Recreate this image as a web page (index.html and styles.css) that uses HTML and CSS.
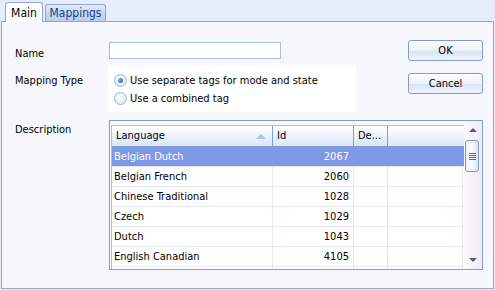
FILE: index.html
```html
<!DOCTYPE html>
<html lang="en">
<head>
	<meta charset="UTF-8">
	<title>Language Mapping</title>
	<link rel="stylesheet" href="styles.css">
</head>
<body>
	<div class="window">
		<div class="tabs">
			<div class="tab tab-active">Main</div>
			<div class="tab">Mappings</div>
		</div>

		<div class="panel">
			<div class="form">
				<label class="lbl lbl-name">Name</label>
				<input class="name-input" type="text">

				<div class="buttons">
					<button type="button" class="btn">OK</button>
					<button type="button" class="btn">Cancel</button>
				</div>

				<label class="lbl lbl-map">Mapping Type</label>
				<div class="radio-box">
					<div class="radio"><span class="dot dot-on"></span>Use separate tags for mode and state</div>
					<div class="radio"><span class="dot"></span>Use a combined tag</div>
				</div>

				<label class="lbl lbl-desc">Description</label>
				<div class="grid">
					<div class="list">
						<div class="list-head">
							<div class="hcell">Language<span class="sort"></span></div>
							<div class="hcell">Id</div>
							<div class="hcell">De...</div>
							<div class="hcell"></div>
						</div>
						<div class="row row-sel"><div class="cell">Belgian Dutch</div><div class="cell num">2067</div><div class="cell"></div><div class="cell"></div></div>
						<div class="row"><div class="cell">Belgian French</div><div class="cell num">2060</div><div class="cell"></div><div class="cell"></div></div>
						<div class="row"><div class="cell">Chinese Traditional</div><div class="cell num">1028</div><div class="cell"></div><div class="cell"></div></div>
						<div class="row"><div class="cell">Czech</div><div class="cell num">1029</div><div class="cell"></div><div class="cell"></div></div>
						<div class="row"><div class="cell">Dutch</div><div class="cell num">1043</div><div class="cell"></div><div class="cell"></div></div>
						<div class="row"><div class="cell">English Canadian</div><div class="cell num">4105</div><div class="cell"></div><div class="cell"></div></div>
						<div class="row"><div class="cell"></div><div class="cell"></div><div class="cell"></div><div class="cell"></div></div>
					</div>
					<div class="scrollbar">
						<div class="sb-btn"><span class="arrow-up"></span></div>
						<div class="thumb"><span class="grip"></span></div>
						<div class="sb-track"></div>
						<div class="sb-btn"><span class="arrow-down"></span></div>
					</div>
				</div>
			</div>
		</div>
	</div>
</body>
</html>
```

FILE: styles.css
```css
* {
	box-sizing: border-box;
}

body {
	margin: 0;
	background-color: #e6ecf9;
	font-family: "DejaVu Sans Condensed", "DejaVu Sans", sans-serif;
	font-stretch: condensed;
	font-size: 11px;
	color: #000000;
}

.window {
	width: 495px;
	height: 290px;
}

/* tabs */
.tabs {
	height: 21px;
	display: flex;
	align-items: flex-end;
	gap: 2px;
	padding-left: 5px;
	position: relative;
	z-index: 1;
}

.tab {
	width: 61px;
	height: 17px;
	border: 1px solid #8fa7d8;
	border-bottom: none;
	border-radius: 3px 3px 0 0;
	background: linear-gradient(#e4ecfa, #c9d9f4 45%, #b9cdf0);
	color: #1d3c84;
	text-align: center;
	line-height: 16px;
	font-size: 12px;
}

.tab-active {
	width: 38px;
	height: 20px;
	margin-bottom: -1px;
	background: #ffffff;
	color: #000000;
	line-height: 20px;
}

/* panel */
.panel {
	margin-left: 1px;
	width: 493px;
	height: 268px;
	border: 1px solid #8da6d6;
	background-color: #f5f7fd;
}

.form {
	display: grid;
	grid-template-columns: 94px 1fr 75px;
	grid-template-rows: 21px 51px auto;
	padding: 18px 10px 0 13px;
}

.lbl {
	grid-column: 1;
	line-height: 13px;
}

.lbl-name {
	padding-top: 7px;
}

.lbl-map {
	padding-top: 13px;
}

.lbl-desc {
	margin-top: 8px;
	padding-top: 3px;
}

.name-input {
	grid-column: 2;
	align-self: center;
	width: 172px;
	height: 17px;
	margin: 0;
	border: 1px solid #a7bde8;
	background-color: #ffffff;
}

.buttons {
	grid-column: 3;
	grid-row: 1 / 3;
	display: flex;
	flex-direction: column;
	gap: 12px;
}

.btn {
	width: 75px;
	height: 21px;
	border: 1px solid #7f9bd0;
	border-radius: 3px;
	background: linear-gradient(#fbfcff, #eef2fb 50%, #dbe4f7 52%, #eef2fc);
	font: inherit;
	font-size: 11px;
	color: #000000;
	padding: 0;
}

.radio-box {
	grid-column: 2;
	margin-top: 4px;
	margin-left: -1px;
	width: 248px;
	height: 47px;
	padding: 6px 0 0 6px;
	background-color: #ffffff;
}

.radio {
	display: flex;
	align-items: center;
	height: 18px;
	gap: 3px;
}

.dot {
	width: 13px;
	height: 13px;
	border: 1px solid #a5b2c6;
	border-radius: 50%;
	background: radial-gradient(circle at 40% 40%, #ffffff, #dde3ec);
	display: flex;
	align-items: center;
	justify-content: center;
}

.dot-on::after {
	content: "";
	width: 5px;
	height: 5px;
	border-radius: 50%;
	background: radial-gradient(circle at 40% 40%, #6cb0e8, #1c5fa8);
}

/* language grid */
.grid {
	grid-column: 2 / 4;
	margin-top: 8px;
	height: 150px;
	border: 1px solid #7f9fd6;
	background-color: #f8fafe;
	display: flex;
	padding: 4px 0 0 1px;
}

.list {
	flex: 1;
	overflow: hidden;
	border-left: 1px solid #a9c0ea;
}

.list-head, .row {
	display: grid;
	grid-template-columns: 161px 81px 34px 75px;
}

.list-head {
	height: 22px;
	border-top: 1px solid #a9c0ea;
	border-bottom: 1px solid #7f9fd6;
	background: linear-gradient(#ffffff, #f0f5fd 40%, #d9e5fa);
}

.hcell {
	border-right: 1px solid #7f9fd6;
	padding: 0 4px;
	line-height: 20px;
	display: flex;
	justify-content: space-between;
	align-items: center;
}

.hcell:last-child {
	border-right: none;
}

.sort {
	width: 0;
	height: 0;
	margin-right: 2px;
	border-left: 5px solid transparent;
	border-right: 5px solid transparent;
	border-bottom: 5px solid #a8c3ef;
}

.row {
	height: 20px;
	border-bottom: 1px solid #e2eaf8;
	background-color: #ffffff;
}

.cell {
	border-right: 1px solid #e2eaf8;
	padding: 0 3px 0 2px;
	line-height: 19px;
	white-space: nowrap;
}

.num {
	text-align: right;
	padding-right: 4px;
}

.row-sel {
	background-color: #7f98e5;
	color: #ffffff;
}

.row-sel .cell {
	border-right-color: #7f98e5;
}

/* scrollbar */
.scrollbar {
	width: 18px;
	margin-top: -4px;
	display: flex;
	flex-direction: column;
	background: linear-gradient(90deg, #fbf8fb, #f3ebf2);
}

.sb-btn {
	height: 18px;
	display: flex;
	align-items: center;
	justify-content: center;
}

.arrow-up, .arrow-down {
	width: 0;
	height: 0;
	border-left: 4px solid transparent;
	border-right: 4px solid transparent;
}

.arrow-up {
	border-bottom: 4px solid #4f6088;
}

.arrow-down {
	border-top: 4px solid #4f6088;
}

.thumb {
	width: 14px;
	height: 32px;
	margin: 1px 0 0 1px;
	border: 1px solid #8798b9;
	border-radius: 3px;
	background: linear-gradient(90deg, #e9ecf7, #ffffff 40%, #dde2f0);
	display: flex;
	align-items: center;
	justify-content: center;
}

.grip {
	width: 7px;
	height: 7px;
	background: repeating-linear-gradient(#56678c 0 1px, transparent 1px 2px);
}

.sb-track {
	flex: 1;
}
```
